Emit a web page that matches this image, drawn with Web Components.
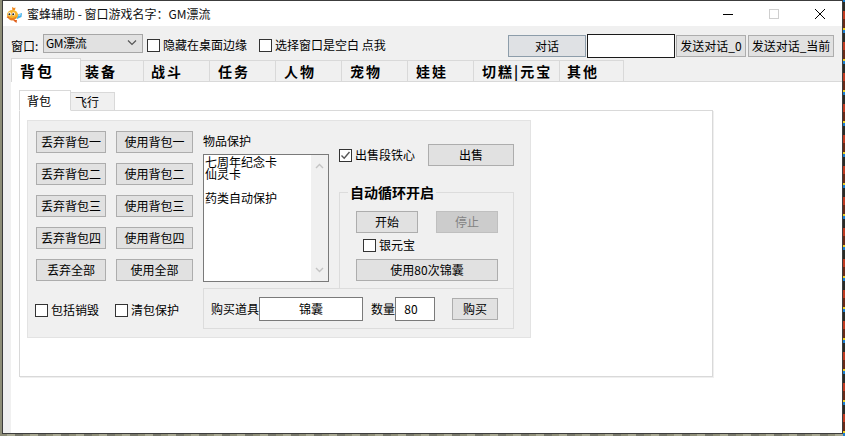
<!DOCTYPE html>
<html lang="zh">
<head>
<meta charset="utf-8">
<title>蜜蜂辅助</title>
<style>
    html, body{
        margin: 0;
        height: 100%;
    }
    body{
        width: 845px;
        height: 436px;
        overflow: hidden;
        font: 12px/16px "Noto Sans CJK SC", "Liberation Sans", sans-serif;
        color: #000;
        background:
            repeating-linear-gradient(0deg, #1a7fd0 0 3px, #f0d020 3px 5px, #6a2a18 5px 14px, #c03a20 14px 22px, #2b2b26 22px 31px) 843px 0 / 2px 100% no-repeat,
            repeating-linear-gradient(90deg, #8e8e78 0 7px, #a9a993 7px 15px, #77776a 15px 23px);
    }
</style>
</head>
<body>
<app-window>
    <title-bar slot="title">蜜蜂辅助 - 窗口游戏名字：GM漂流</title-bar>
    <tool-bar slot="tools"></tool-bar>
    <main-tabs slot="tabs"></main-tabs>
    <bag-page slot="page"></bag-page>
</app-window>

<script>
const baseCss = `
    * { box-sizing: border-box; }
`;

// plain windows button, slot is the caption
class winBtn extends HTMLElement{
    constructor() {
        super();
        this.attachShadow({mode: 'open'});
        this.shadowRoot.innerHTML = `
<style>
    :host{
        display: flex;
        align-items: center;
        justify-content: center;
        width: var(--w, 70px);
        height: 22px;
        background: #e1e1e1;
        border: 1px solid #adadad;
        box-sizing: border-box;
        white-space: nowrap;
        line-height: 16px;
    }
    :host([disabled]){
        background: #cccccc;
        border-color: #bfbfbf;
        color: #838383;
    }
    :host([primary]){
        background: #dfe1e4;
        border-color: #8d9daa;
    }
</style>
<slot></slot>`;
    }
}

class winCheck extends HTMLElement{
    constructor() {
        super();
        this.attachShadow({mode: 'open'});
        const mark = this.getAttribute('checked') != null
            ? '<svg width="11" height="11" viewBox="0 0 11 11"><path d="M1.5 5.5 L4.2 8.2 L9.5 2" fill="none" stroke="#555" stroke-width="1.4"/></svg>'
            : '';
        this.shadowRoot.innerHTML = `
<style>
    ${baseCss}
    :host{
        display: inline-flex;
        align-items: center;
        gap: 3px;
        white-space: nowrap;
    }
    .box{
        width: 13px;
        height: 13px;
        background: #fff;
        border: 1px solid #333;
        display: flex;
        flex: none;
    }
</style>
<span class="box">${mark}</span><slot></slot>`;
    }
}

// sunken edit box
class winField extends HTMLElement{
    constructor() {
        super();
        this.attachShadow({mode: 'open'});
        this.shadowRoot.innerHTML = `
<style>
    :host{
        display: flex;
        align-items: center;
        justify-content: center;
        width: var(--w, 100px);
        height: 24px;
        background: #fff;
        border: 1px solid #7a7a7a;
        box-sizing: border-box;
        white-space: nowrap;
    }
    :host([dark]){
        border-color: #1a1a1a;
    }
</style>
<slot></slot>`;
    }
}

class appWindow extends HTMLElement{
    constructor() {
        super();
        this.attachShadow({mode: 'open'});
        this.shadowRoot.innerHTML = `
<style>
    ${baseCss}
    :host{
        display: flex;
        flex-direction: column;
        width: 841px;
        height: 434px;
        margin-left: 2px;
        border: 1px solid #3c3c3c;
        background: #f0f0f0;
        box-sizing: border-box;
    }
    .lower{
        flex: 1;
        display: flex;
        flex-direction: column;
        padding-left: 8px;
        min-height: 0;
    }
</style>
<slot name="title"></slot>
<slot name="tools"></slot>
<div class="lower">
    <slot name="tabs"></slot>
    <slot name="page"></slot>
</div>`;
    }
}

class titleBar extends HTMLElement{
    constructor() {
        super();
        this.attachShadow({mode: 'open'});
        this.shadowRoot.innerHTML = `
<style>
    ${baseCss}
    :host{
        display: flex;
        align-items: center;
        height: 25px;
        background: #fff;
        padding-left: 3px;
        box-sizing: border-box;
        flex: none;
    }
    .logo{
        flex: none;
        margin: 2px 5px 0 0;
    }
    .text{
        flex: 1;
        white-space: nowrap;
        color: #111;
    }
    .ctl{
        width: 46px;
        height: 25px;
        display: flex;
        align-items: center;
        justify-content: center;
        flex: none;
    }
</style>
<svg class="logo" width="16" height="16" viewBox="0 0 16 16">
    <path d="M10 8 L16 6 L15.5 10 L11 12 Z" fill="#45b2ec"/>
    <path d="M11 8 L15 7 L14 9 Z" fill="#b5e3f8"/>
    <path d="M6 0 L8 1 L9.5 0.5 L9 3 L6.5 4 Z" fill="#ef8a20"/>
    <ellipse cx="6.5" cy="8" rx="5.5" ry="5" fill="#f7b52c"/>
    <path d="M1.5 9 Q6 13 11 9 Q9 13.5 6 13.5 Q3 13.5 1.5 9 Z" fill="#ea7f1f"/>
    <path d="M7 13 L11 13 L10.5 16 L8.5 14.5 Z" fill="#e0601c"/>
    <circle cx="3.6" cy="7" r="1.7" fill="#fff"/>
    <circle cx="3.4" cy="7.2" r="1" fill="#222"/>
    <circle cx="7.4" cy="7" r="1.7" fill="#fff"/>
    <circle cx="7.2" cy="7.2" r="1" fill="#222"/>
    <path d="M0.5 10 L2.5 9.5 L2.5 11.5 Z" fill="#d9541e"/>
</svg>
<span class="text"><slot></slot></span>
<span class="ctl"><svg width="10" height="10"><path d="M0 5.5 H10" stroke="#000"/></svg></span>
<span class="ctl"><svg width="10" height="10"><rect x=".5" y=".5" width="9" height="9" fill="none" stroke="#cfcfcf"/></svg></span>
<span class="ctl" style="margin-right:-1px"><svg width="10" height="10"><path d="M0 0 L10 10 M10 0 L0 10" stroke="#000"/></svg></span>`;
    }
}

class toolBar extends HTMLElement{
    constructor() {
        super();
        this.attachShadow({mode: 'open'});
        this.shadowRoot.innerHTML = `
<style>
    ${baseCss}
    :host{
        display: flex;
        align-items: flex-start;
        height: 34px;
        padding: 8px 0 0 8px;
        box-sizing: border-box;
        flex: none;
    }
    .label{
        margin: 4px 2px 0 0;
        width: 30px;
        white-space: nowrap;
    }
    .combo{
        width: 100px;
        height: 19px;
        background: #e1e1e1;
        border: 1px solid #a6a6a6;
        display: flex;
        align-items: center;
        justify-content: space-between;
        padding: 0 5px 1px 2px;
        margin-right: 4px;
        white-space: nowrap;
        letter-spacing: -.4px;
    }
    win-check{
        margin-top: 3px;
    }
    .talk{
        display: flex;
        gap: 1px;
        margin-left: auto;
        margin-right: 8px;
        align-items: flex-start;
    }
    .talk win-btn{
        margin-top: 1px;
    }
</style>
<span class="label">窗口:</span>
<span class="combo"><span>GM漂流</span>
    <svg width="10" height="6" viewBox="0 0 10 6"><path d="M1 .5 L5 4.5 L9 .5" fill="none" stroke="#555" stroke-width="1.2"/></svg>
</span>
<win-check style="margin-right:12px">隐藏在桌面边缘</win-check>
<win-check>选择窗口是空白 点我</win-check>
<div class="talk">
    <win-btn primary style="--w:78px">对话</win-btn>
    <win-field dark style="--w:88px"></win-field>
    <win-btn style="--w:70px">发送对话_0</win-btn>
    <win-btn style="--w:86px;margin-left:1px">发送对话_当前</win-btn>
</div>`;
    }
}

class mainTabs extends HTMLElement{
    constructor() {
        super();
        this.attachShadow({mode: 'open'});
        // name, width, left padding
        const names = [['装备', 63, 4], ['战斗', 66, 7], ['任务', 66, 8], ['人物', 66, 8], ['宠物', 66, 8], ['娃娃', 66, 8], ['切糕|元宝', 86, 8], ['其他', 64, 7]];
        const tabs = names.map(n => `<span class="tab" style="width:${n[1]}px;padding-left:${n[2]}px">${n[0]}</span>`).join('');
        this.shadowRoot.innerHTML = `
<style>
    ${baseCss}
    :host{
        display: flex;
        height: 22px;
        flex: none;
        border-bottom: 1px solid #d9d9d9;
        box-sizing: border-box;
        font-size: 14px;
        font-weight: 700;
        letter-spacing: 2px;
        white-space: nowrap;
        position: relative;
    }
    .tab{
        height: 21px;
        line-height: 21px;
        border-right: 1px solid #d9d9d9;
        border-top: 1px solid #d9d9d9;
    }
    .tab.on{
        width: 70px;
        height: 24px;
        margin-top: -2px;
        background: #fff;
        border: 1px solid #d9d9d9;
        border-bottom: 0;
        font-size: 15px;
        padding-left: 8px;
        line-height: 23px;
        position: relative;
        z-index: 1;
    }
</style>
<span class="tab on">背包</span>${tabs}`;
    }
}

class bagPage extends HTMLElement{
    constructor() {
        super();
        this.attachShadow({mode: 'open'});
        const rows = ['一', '二', '三', '四'];
        let btns = '';
        rows.forEach(r => {
            btns += `<win-btn style="--w:70px">丢弃背包${r}</win-btn><win-btn style="--w:77px">使用背包${r}</win-btn>`;
        });
        btns += `<win-btn style="--w:70px">丢弃全部</win-btn><win-btn style="--w:77px">使用全部</win-btn>`;

        this.shadowRoot.innerHTML = `
<style>
    ${baseCss}
    :host{
        display: flex;
        flex-direction: column;
        flex: 1;
        background: #fff;
        padding: 8px 0 0 8px;
        min-height: 0;
    }
    .subtabs{
        display: flex;
        height: 21px;
        flex: none;
        align-items: flex-end;
        margin-bottom: -1px;
        position: relative;
        z-index: 1;
    }
    .subtab{
        width: 44px;
        height: 19px;
        background: #f0f0f0;
        border: 1px solid #d9d9d9;
        border-left: 0;
        border-bottom-color: #d9d9d9;
        padding-left: 4px;
        line-height: 18px;
    }
    .subtab.on{
        width: 52px;
        height: 21px;
        background: #fff;
        border-left: 1px solid #d9d9d9;
        border-bottom-color: #fff;
        padding-left: 7px;
        line-height: 19px;
    }
    .sheet{
        width: 694px;
        height: 267px;
        border: 1px solid #d9d9d9;
        box-shadow: 1px 1px 0 #efefef;
        padding: 9px 0 0 7px;
    }
    .panel{
        width: 504px;
        height: 218px;
        background: #f0f0f0;
        border: 1px solid #e3e3e3;
        padding: 10px 0 0 8px;
        display: flex;
        gap: 10px;
    }
    .left{
        width: 157px;
        flex: none;
    }
    .btns{
        display: grid;
        grid-template-columns: 70px 77px;
        gap: 10px;
    }
    .checks{
        display: flex;
        gap: 14px;
        margin: 21px 0 0 -1px;
    }
    .checks win-check:first-child{
        width: 66px;
    }
    .right{
        width: 311px;
        flex: none;
    }
    .top{
        display: flex;
        gap: 10px;
        height: 157px;
    }
    .prot{
        width: 126px;
        flex: none;
    }
    .prot .cap{
        height: 23px;
        line-height: 19px;
    }
    .list{
        height: 128px;
        background: #fff;
        border: 1px solid #7a7a7a;
        display: flex;
    }
    .items{
        flex: 1;
        padding: 1px 0 0 1px;
    }
    .items div{
        height: 12px;
        line-height: 12px;
        white-space: nowrap;
    }
    .bar{
        width: 17px;
        background: #f0f0f0;
        display: flex;
        flex-direction: column;
        justify-content: space-between;
        align-items: center;
        padding: 8px 0;
    }
    .side{
        flex: 1;
        padding-top: 13px;
    }
    .sell{
        display: flex;
        justify-content: space-between;
        align-items: center;
    }
    .group{
        position: relative;
        height: 97px;
        margin-top: 26px;
        border: 1px solid #dcdcdc;
        padding: 18px 15px 0 16px;
    }
    .legend{
        position: absolute;
        left: 8px;
        top: -9px;
        padding: 0 2px;
        background: #f0f0f0;
        font-size: 14px;
        font-weight: 700;
        line-height: 16px;
        white-space: nowrap;
    }
    .pair{
        display: flex;
        justify-content: space-between;
    }
    .group win-check{
        margin: 5px 0 7px 7px;
        height: 14px;
    }
    .buy{
        height: 41px;
        border: 1px solid #dcdcdc;
        display: flex;
        align-items: center;
        padding-left: 7px;
        white-space: nowrap;
    }
    .buy win-btn{
        margin-left: 17px;
    }
</style>
<div class="subtabs">
    <span class="subtab on">背包</span>
    <span class="subtab">飞行</span>
</div>
<div class="sheet">
    <div class="panel">
        <div class="left">
            <div class="btns">${btns}</div>
            <div class="checks">
                <win-check>包括销毁</win-check>
                <win-check>清包保护</win-check>
            </div>
        </div>
        <div class="right">
            <div class="top">
                <div class="prot">
                    <div class="cap">物品保护</div>
                    <div class="list">
                        <div class="items">
                            <div>七周年纪念卡</div>
                            <div>仙灵卡</div>
                            <div></div>
                            <div>药类自动保护</div>
                        </div>
                        <div class="bar">
                            <svg width="9" height="6" viewBox="0 0 9 6"><path d="M1 5 L4.5 1.5 L8 5" fill="none" stroke="#c4c4c4" stroke-width="1.4"/></svg>
                            <svg width="9" height="6" viewBox="0 0 9 6"><path d="M1 1 L4.5 4.5 L8 1" fill="none" stroke="#c4c4c4" stroke-width="1.4"/></svg>
                        </div>
                    </div>
                </div>
                <div class="side">
                    <div class="sell">
                        <win-check checked>出售段铁心</win-check>
                        <win-btn style="--w:86px">出售</win-btn>
                    </div>
                    <div class="group">
                        <span class="legend">自动循环开启</span>
                        <div class="pair">
                            <win-btn style="--w:62px">开始</win-btn>
                            <win-btn disabled style="--w:62px">停止</win-btn>
                        </div>
                        <win-check>银元宝</win-check>
                        <win-btn style="--w:142px">使用80次锦囊</win-btn>
                    </div>
                </div>
            </div>
            <div class="buy">
                <span style="width:48px;flex:none">购买道具</span>
                <win-field style="--w:104px">锦囊</win-field>
                <span style="margin-left:8px">数量</span>
                <win-field style="--w:40px;padding-right:8px">80</win-field>
                <win-btn style="--w:46px">购买</win-btn>
            </div>
        </div>
    </div>
</div>`;
    }
}

window.customElements.define('win-btn', winBtn);
window.customElements.define('win-check', winCheck);
window.customElements.define('win-field', winField);
window.customElements.define('title-bar', titleBar);
window.customElements.define('tool-bar', toolBar);
window.customElements.define('main-tabs', mainTabs);
window.customElements.define('bag-page', bagPage);
window.customElements.define('app-window', appWindow);
</script>
</body>
</html>
